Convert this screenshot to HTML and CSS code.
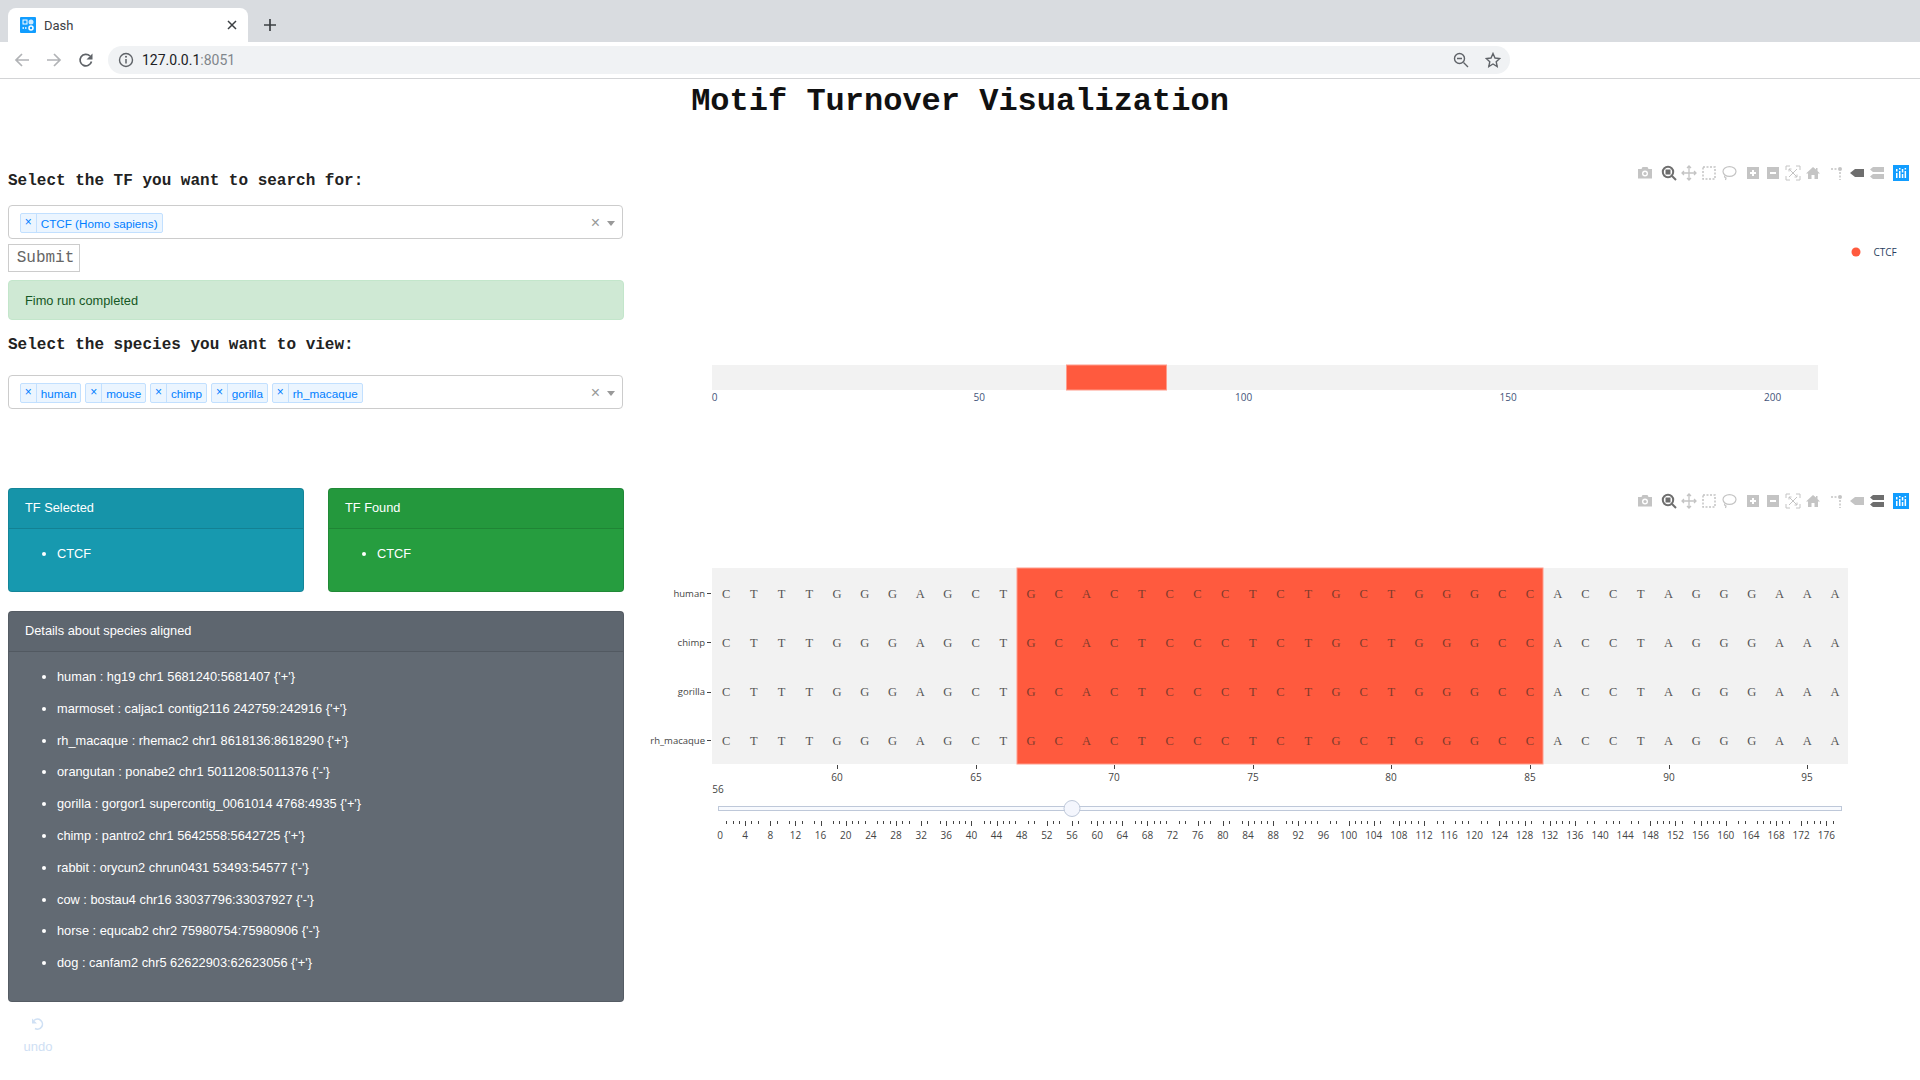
FILE: index.html
```html
<!DOCTYPE html>
<html lang="en">
<head>
    <meta charset="UTF-8">
    <title>Dash</title>
    <link rel="stylesheet" href="styles.css">
</head>
<body>

    <!-- icons shared by the two plot toolbars -->
    <svg class="icon-defs" width="0" height="0">
        <symbol id="i-camera" viewBox="0 0 16 16"><path d="M1 4h3.5l1-2h5l1 2H15v9.500H1z" fill="currentColor"/><circle cx="8" cy="8.500" r="3" fill="#fff"/><circle cx="8" cy="8.500" r="1.600" fill="currentColor"/></symbol>
        <symbol id="i-zoom" viewBox="0 0 16 16"><circle cx="7" cy="7" r="5.200" fill="none" stroke="currentColor" stroke-width="2"/><rect x="4.500" y="4.500" width="5" height="5" fill="currentColor"/><path d="M11 11l4 4" stroke="currentColor" stroke-width="2"/></symbol>
        <symbol id="i-pan" viewBox="0 0 16 16"><path d="M8 1v14M1 8h14M6 3l2-2 2 2M6 13l2 2 2-2M3 6L1 8l2 2M13 6l2 2-2 2" fill="none" stroke="currentColor" stroke-width="1.300"/></symbol>
        <symbol id="i-box" viewBox="0 0 16 16"><rect x="2" y="2" width="12" height="12" fill="none" stroke="currentColor" stroke-width="1.500" stroke-dasharray="2 1.500"/></symbol>
        <symbol id="i-lasso" viewBox="0 0 16 16"><ellipse cx="8.500" cy="6.500" rx="6.500" ry="4.800" fill="none" stroke="currentColor" stroke-width="1.200"/><path d="M4 10.500c-1 1.500 0 2 1 2.500l-.5 2" fill="none" stroke="currentColor" stroke-width="1.200"/></symbol>
        <symbol id="i-plus" viewBox="0 0 16 16"><path fill-rule="evenodd" d="M2 2h12v12H2zM7 5v2H5v2h2v2h2V9h2V7H9V5z" fill="currentColor"/></symbol>
        <symbol id="i-minus" viewBox="0 0 16 16"><path fill-rule="evenodd" d="M2 2h12v12H2zM5 7v2h6V7z" fill="currentColor"/></symbol>
        <symbol id="i-auto" viewBox="0 0 16 16"><path d="M1 5V1h4M11 1h4v4M15 11v4h-4M5 15H1v-4M4 4l8 8M12 4l-8 8M4 4h2.500M4 4v2.500M12 12H9.500M12 12V9.500" fill="none" stroke="currentColor" stroke-width="1"/></symbol>
        <symbol id="i-home" viewBox="0 0 16 16"><path d="M8 2L1 8.500h2V14h3.500v-4h3v4H13V8.500h2L12.500 6V3H11v1.500z" fill="currentColor"/></symbol>
        <symbol id="i-spike" viewBox="0 0 16 16"><path d="M2 4h7" stroke="currentColor" stroke-width="1.500" stroke-dasharray="2 1.500"/><circle cx="11" cy="4" r="2" fill="currentColor"/><path d="M11 7v8" stroke="currentColor" stroke-width="1.500" stroke-dasharray="2 1.500"/></symbol>
        <symbol id="i-closest" viewBox="0 0 16 16"><path d="M1 8l5-4h9v8H6z" fill="currentColor"/></symbol>
        <symbol id="i-compare" viewBox="0 0 16 16"><path d="M1 4.500L4 2h11v5H4zM1 11.500L4 9h11v5H4z" fill="currentColor"/></symbol>
        <symbol id="i-logo" viewBox="0 0 16 16"><rect width="16" height="16" fill="#119dff"/><path d="M3 8h1.500v5H3zM3 4h1.500v2.500H3zM6 6h1.500v7H6zM6 3h1.500v1.500H6zM8.800 9h1.500v4H8.800zM8.800 4h1.500v3.500H8.800zM11.600 6h1.500v7h-1.500zM11.600 3h1.500v1.500h-1.500z" fill="#fff"/></symbol>
    </svg>

    <!-- browser window -->
    <div class="tabstrip">
        <div class="tab">
            <svg class="favicon" width="16" height="16" viewBox="0 0 16 16">
                <rect width="16" height="16" rx="1" fill="#119dff"/>
                <rect x="3" y="3" width="4" height="4" fill="none" stroke="#fff"/>
                <circle cx="11" cy="5" r="2.500" fill="#cfeaff"/>
                <path d="M2.500 11h5" stroke="#fff" stroke-width="1.500" stroke-dasharray="1.500 1"/>
                <circle cx="11" cy="11" r="2" fill="none" stroke="#fff" stroke-width="1.500"/>
            </svg>
            <span class="tab-title">Dash</span>
            <svg class="tab-close" width="10" height="10" viewBox="0 0 10 10"><path d="M1 1l8 8M9 1l-8 8" stroke="#3c4043" stroke-width="1.500"/></svg>
        </div>
        <svg class="new-tab" width="12" height="12" viewBox="0 0 12 12"><path d="M6 0v12M0 6h12" stroke="#3c4043" stroke-width="1.700"/></svg>
    </div>
    <div class="toolbar">
        <svg class="nav-icon" width="16" height="16" viewBox="0 0 16 16"><path d="M15 8H2M8 2L2 8l6 6" fill="none" stroke="#b1b3b6" stroke-width="1.700"/></svg>
        <svg class="nav-icon" width="16" height="16" viewBox="0 0 16 16"><path d="M1 8h13M8 2l6 6-6 6" fill="none" stroke="#b1b3b6" stroke-width="1.700"/></svg>
        <svg class="nav-icon" width="16" height="16" viewBox="0 0 16 16"><path d="M13.500 9.500A5.800 5.800 0 1 1 12 4" fill="none" stroke="#5f6368" stroke-width="1.700"/><path d="M14.500 1.500v6h-6z" fill="#5f6368"/></svg>
        <div class="address">
            <svg width="16" height="16" viewBox="0 0 16 16"><circle cx="8" cy="8" r="6.500" fill="none" stroke="#5f6368" stroke-width="1.400"/><path d="M8 7v4.500" stroke="#5f6368" stroke-width="1.500"/><circle cx="8" cy="4.800" r="1" fill="#5f6368"/></svg>
            <span class="url">127.0.0.1<span class="url-port">:8051</span></span>
            <svg class="addr-zoom" width="16" height="16" viewBox="0 0 16 16"><circle cx="6.500" cy="6.500" r="5" fill="none" stroke="#5f6368" stroke-width="1.400"/><path d="M4 6.500h5M10.500 10.500l4.500 4.500" stroke="#5f6368" stroke-width="1.400"/></svg>
            <svg width="16" height="16" viewBox="0 0 16 16"><path d="M8 1.500l2 4.500 4.800.5-3.600 3.200 1 4.800L8 12l-4.200 2.500 1-4.800L1.200 6.500 6 6z" fill="none" stroke="#5f6368" stroke-width="1.400"/></svg>
        </div>
    </div>

    <h1 class="page-title">Motif Turnover Visualization</h1>

    <main class="layout">

        <section class="controls">
            <h4 class="field-label">Select the TF you want to search for:</h4>
            <div class="dropdown">
                <span class="tag"><span class="tag-x">×</span><span class="tag-text">CTCF (Homo sapiens)</span></span>
                <span class="dd-clear">×</span>
                <span class="dd-arrow"></span>
            </div>
            <button class="submit-btn">Submit</button>
            <div class="alert-ok">Fimo run completed</div>

            <h4 class="field-label field-label-2">Select the species you want to view:</h4>
            <div class="dropdown dropdown-2">
                <span class="tag"><span class="tag-x">×</span><span class="tag-text">human</span></span>
                <span class="tag"><span class="tag-x">×</span><span class="tag-text">mouse</span></span>
                <span class="tag"><span class="tag-x">×</span><span class="tag-text">chimp</span></span>
                <span class="tag"><span class="tag-x">×</span><span class="tag-text">gorilla</span></span>
                <span class="tag"><span class="tag-x">×</span><span class="tag-text">rh_macaque</span></span>
                <span class="dd-clear">×</span>
                <span class="dd-arrow"></span>
            </div>

            <div class="card-row">
                <div class="card card-info">
                    <div class="card-head">TF Selected</div>
                    <ul class="card-list"><li>CTCF</li></ul>
                </div>
                <div class="card card-success">
                    <div class="card-head">TF Found</div>
                    <ul class="card-list"><li>CTCF</li></ul>
                </div>
            </div>

            <div class="card card-details">
                <div class="card-head">Details about species aligned</div>
                <ul class="card-list">
                    <li>human : hg19 chr1 5681240:5681407 {'+'}</li>
                    <li>marmoset : caljac1 contig2116 242759:242916 {'+'}</li>
                    <li>rh_macaque : rhemac2 chr1 8618136:8618290 {'+'}</li>
                    <li>orangutan : ponabe2 chr1 5011208:5011376 {'-'}</li>
                    <li>gorilla : gorgor1 supercontig_0061014 4768:4935 {'+'}</li>
                    <li>chimp : pantro2 chr1 5642558:5642725 {'+'}</li>
                    <li>rabbit : orycun2 chrun0431 53493:54577 {'-'}</li>
                    <li>cow : bostau4 chr16 33037796:33037927 {'-'}</li>
                    <li>horse : equcab2 chr2 75980754:75980906 {'-'}</li>
                    <li>dog : canfam2 chr5 62622903:62623056 {'+'}</li>
                </ul>
            </div>

            <div class="undo">
                <svg width="14" height="14" viewBox="0 0 14 14"><path d="M3 3.500A5 5 0 1 1 4 11.500" fill="none" stroke="#cfe0f4" stroke-width="1.600"/><path d="M1 1.500v5h5z" fill="#cfe0f4"/></svg>
                <span>undo</span>
            </div>
        </section>

        <section class="plots">
            <div class="graph graph-top">
                <div class="modebar">
                    <div class="mb-group"><svg class="mb-btn"><use href="#i-camera"/></svg></div>
                    <div class="mb-group"><svg class="mb-btn mb-active"><use href="#i-zoom"/></svg><svg class="mb-btn"><use href="#i-pan"/></svg><svg class="mb-btn"><use href="#i-box"/></svg><svg class="mb-btn"><use href="#i-lasso"/></svg></div>
                    <div class="mb-group"><svg class="mb-btn"><use href="#i-plus"/></svg><svg class="mb-btn"><use href="#i-minus"/></svg><svg class="mb-btn"><use href="#i-auto"/></svg><svg class="mb-btn"><use href="#i-home"/></svg></div>
                    <div class="mb-group"><svg class="mb-btn"><use href="#i-spike"/></svg><svg class="mb-btn mb-active"><use href="#i-closest"/></svg><svg class="mb-btn"><use href="#i-compare"/></svg></div>
                    <div class="mb-group"><svg class="mb-btn"><use href="#i-logo"/></svg></div>
                </div>
                <svg id="overviewPlot" class="plot" viewBox="632 140 1288 340"></svg>
            </div>
            <div class="graph graph-bottom">
                <div class="modebar">
                    <div class="mb-group"><svg class="mb-btn"><use href="#i-camera"/></svg></div>
                    <div class="mb-group"><svg class="mb-btn mb-active"><use href="#i-zoom"/></svg><svg class="mb-btn"><use href="#i-pan"/></svg><svg class="mb-btn"><use href="#i-box"/></svg><svg class="mb-btn"><use href="#i-lasso"/></svg></div>
                    <div class="mb-group"><svg class="mb-btn"><use href="#i-plus"/></svg><svg class="mb-btn"><use href="#i-minus"/></svg><svg class="mb-btn"><use href="#i-auto"/></svg><svg class="mb-btn"><use href="#i-home"/></svg></div>
                    <div class="mb-group"><svg class="mb-btn"><use href="#i-spike"/></svg><svg class="mb-btn"><use href="#i-closest"/></svg><svg class="mb-btn mb-active"><use href="#i-compare"/></svg></div>
                    <div class="mb-group"><svg class="mb-btn"><use href="#i-logo"/></svg></div>
                </div>
                <svg id="alignPlot" class="plot" viewBox="632 480 1288 400"></svg>
            </div>
        </section>

    </main>

    <script src="chart.js"></script>
</body>
</html>
```

FILE: styles.css
```css
* {
    box-sizing: border-box;
}

body {
    font-family: 'Liberation Sans', Arial, sans-serif;
    margin: 0;
    padding: 0;
    background: white;
    overflow: hidden;
}

.icon-defs {
    position: absolute;
}

/* browser window */
.tabstrip {
    height: 42px;
    background: #d9dce0;
    display: flex;
    align-items: flex-end;
    padding-left: 8px;
}

.tab {
    width: 240px;
    height: 34px;
    background: white;
    border-radius: 8px 8px 0 0;
    display: flex;
    align-items: center;
    padding: 0 11px 0 12px;
}

.tab-title {
    font-family: Roboto, sans-serif;
    font-size: 13px;
    color: #3c4043;
    margin-left: 8px;
}

.tab-close {
    margin-left: auto;
}

.new-tab {
    margin: 0 0 11px 16px;
}

.toolbar {
    height: 37px;
    border-bottom: 1px solid #d3d4d6;
    display: flex;
    align-items: center;
    padding-left: 14px;
    gap: 16px;
}

.address {
    width: 1402px;
    height: 28px;
    background: #f0f2f4;
    border-radius: 14px;
    display: flex;
    align-items: center;
    padding: 0 9px 0 10px;
    margin-left: -2px;
}

.url {
    font-family: Roboto, sans-serif;
    font-size: 14px;
    color: #202124;
    margin-left: 8px;
}

.url-port {
    color: #80868b;
}

.addr-zoom {
    margin-left: auto;
    margin-right: 16px;
}

/* page */
.page-title {
    font-family: 'Liberation Mono', monospace;
    font-size: 32px;
    font-weight: bold;
    line-height: 42px;
    margin: 0;
    padding-top: 2px;
    height: 42px;
    text-align: center;
    color: #111;
}

.layout {
    display: flex;
}

.controls {
    width: 632px;
    padding-left: 8px;
    flex: none;
}

.field-label {
    font-family: 'Liberation Mono', monospace;
    font-size: 16px;
    line-height: 22px;
    font-weight: bold;
    color: #222;
    margin: 49px 0 13px;
}

.field-label-2 {
    margin: 14px 0 19px;
}

.dropdown {
    width: 615px;
    height: 34px;
    border: 1px solid #ccc;
    border-radius: 4px;
    display: flex;
    align-items: center;
    gap: 4px;
    padding: 2px 7px 0 11px;
}

.tag {
    height: 20px;
    display: flex;
    align-items: center;
    background: #ebf5ff;
    border: 1px solid #c2e0ff;
    border-radius: 2px;
    color: #007eff;
    font-size: 11.700px;
}

.tag-x {
    width: 15.700px;
    height: 100%;
    border-right: 1px solid #c2e0ff;
    text-align: center;
    line-height: 17px;
    font-size: 12px;
    flex: none;
}

.tag-text {
    padding: 0 4px;
    white-space: nowrap;
}

.dd-clear {
    margin-left: auto;
    color: #999;
    font-size: 16px;
    line-height: 16px;
    margin-right: 3px;
}

.dd-arrow {
    width: 0;
    height: 0;
    border: 4px solid transparent;
    border-top: 5px solid #999;
    border-bottom: none;
}

.submit-btn {
    display: block;
    width: 72px;
    height: 28px;
    margin-top: 5px;
    padding: 0 0 0 3px;
    background: white;
    border: 1px solid #ccc;
    font-family: 'Liberation Mono', monospace;
    font-size: 16px;
    color: #666;
}

.alert-ok {
    width: 616px;
    height: 40px;
    margin-top: 8px;
    padding: 0 16px;
    line-height: 39px;
    background: #cfe9d4;
    border: 1px solid #c3e6cb;
    border-radius: 4px;
    font-size: 12.800px;
    color: #155724;
}

.card-row {
    display: flex;
    gap: 24px;
    margin-top: 79px;
    width: 616px;
}

.card-row .card {
    width: 296px;
    height: 104px;
}

.card {
    color: white;
    border: 1px solid rgba(0,0,0,0.125);
    border-radius: 4px;
    font-size: 12.800px;
}

.card-head {
    height: 40px;
    line-height: 38px;
    padding: 0 16px;
    background: rgba(0,0,0,0.03);
    border-bottom: 1px solid rgba(0,0,0,0.125);
}

.card-info {
    background: #1799af;
}

.card-success {
    background: #269d3f;
}

.card-details {
    width: 616px;
    height: 391px;
    margin-top: 19px;
    background: #626a73;
}

.card-list {
    margin: 17px 0 0;
    padding-left: 48px;
    line-height: 16px;
}

.card-list li {
    margin-bottom: 15.800px;
}

.undo {
    width: 60px;
    margin-top: 15px;
    display: flex;
    flex-direction: column;
    align-items: center;
    gap: 8px;
    color: #cfe0f4;
    font-size: 13px;
}

.plots {
    flex: 1;
    padding-top: 19px;
}

.graph {
    position: relative;
}

.graph-top {
    height: 340px;
}

.graph-bottom {
    height: 400px;
}

.plot {
    display: block;
    width: 1288px;
    height: 100%;
    font-family: 'Open Sans', sans-serif;
    font-size: 10px;
}

/* plotly toolbar */
.modebar {
    position: absolute;
    right: 11px;
    display: flex;
    gap: 8px;
    color: #c4c4c4;
}

.graph-top .modebar {
    top: 25px;
}

.graph-bottom .modebar {
    top: 13px;
}

.mb-group {
    display: flex;
    gap: 4px;
}

.mb-btn {
    width: 16px;
    height: 16px;
}

.mb-active {
    color: #6e6e6e;
}

/* chart text and shapes */
.bg-band {
    fill: #f2f2f2;
}

.red-band {
    fill: #ff5a3e;
    stroke: #ff9c8b;
    stroke-width: 1;
}

.tick-label {
    fill: #444;
    text-anchor: middle;
}

.tick-label-top {
    fill: #44557a;
}

.row-label {
    fill: #444;
    font-size: 9.500px;
    text-anchor: end;
}

.legend-label {
    fill: #2a3f5f;
}

.tick-mark {
    stroke: #444;
    stroke-width: 1;
    shape-rendering: crispEdges;
}

.base {
    font-family: 'Liberation Serif', serif;
    font-size: 12.500px;
    text-anchor: middle;
    fill: #555;
}

.base-on-red {
    fill: #7d3a2c;
}

.slider-rail {
    fill: #f8fafe;
    stroke: #bec8d9;
    stroke-width: 1;
}

.slider-handle {
    fill: #f4f6fd;
    stroke: #bec8d9;
    stroke-width: 1;
}
```

FILE: chart.js
```js
const NS = "http://www.w3.org/2000/svg";

function add(svg, tag, attrs, text) {
  const el = document.createElementNS(NS, tag);
  for (const k in attrs) el.setAttribute(k, attrs[k]);
  if (text !== undefined) el.textContent = text;
  svg.appendChild(el);
  return el;
}

// overview bar
const top1 = document.getElementById("overviewPlot");
add(top1, "rect", { class: "bg-band", x: 712, y: 365, width: 1106, height: 25 });
add(top1, "rect", { class: "red-band", x: 1066.5, y: 365, width: 100, height: 25 });
[0, 50, 100, 150, 200].forEach(v => {
  add(top1, "text", { class: "tick-label tick-label-top", x: 714.7 + v * 5.29, y: 400.5 }, v);
});
add(top1, "circle", { cx: 1856, cy: 252, r: 4.5, fill: "#ff5a3e" });
add(top1, "text", { class: "legend-label", x: 1873.5, y: 255.5 }, "CTCF");

// alignment
const plot = document.getElementById("alignPlot");
const seq = "CTTTGGGAGCTGCACTCCCTCTGCTGGGCCACCTAGGGAAA";
const rows = [["human", 593], ["chimp", 642], ["gorilla", 691.5], ["rh_macaque", 740]];
const xOf = n => 837 + (n - 60) * 27.72;

add(plot, "rect", { class: "bg-band", x: 712, y: 568, width: 1136, height: 196 });
add(plot, "rect", { class: "red-band", x: 1017, y: 568, width: 526, height: 196 });

rows.forEach(([name, y]) => {
  add(plot, "text", { class: "row-label", x: 705, y: y + 3.5 }, name);
  add(plot, "line", { class: "tick-mark", x1: 707, x2: 711, y1: Math.round(y), y2: Math.round(y) });
  seq.split("").forEach((b, i) => {
    const pos = 56 + i;
    const onRed = pos >= 67 && pos <= 85;
    add(plot, "text", { class: onRed ? "base base-on-red" : "base", x: xOf(pos), y: y + 4.5 }, b);
  });
});

[60, 65, 70, 75, 80, 85, 90, 95].forEach(v => {
  const x = Math.round(xOf(v));
  add(plot, "line", { class: "tick-mark", x1: x, x2: x, y1: 765, y2: 769 });
  add(plot, "text", { class: "tick-label", x: x, y: 781 }, v);
});

const skipped = [0, 7, 10, 14, 17, 24, 31, 34, 41, 48, 51, 55, 58, 65, 72, 75, 79, 82, 89, 96, 99, 106, 113,
  116, 120, 123, 130, 137, 140, 144, 147, 154, 161, 164, 171];
const sx = n => 720 + n * 6.286;

add(plot, "text", { class: "tick-label", x: 718, y: 793 }, 56);
add(plot, "rect", { class: "slider-rail", x: 718.5, y: 806.5, width: 1123, height: 4 });

for (let n = 0; n <= 177; n++) {
  if (!skipped.includes(n)) {
    const x = Math.round(sx(n));
    add(plot, "line", { class: "tick-mark", x1: x, x2: x, y1: 821, y2: n % 4 === 0 ? 826 : 824 });
  }
  if (n % 4 === 0) {
    add(plot, "text", { class: "tick-label", x: sx(n), y: 839 }, n);
  }
}
add(plot, "circle", { class: "slider-handle", cx: 1072, cy: 808.5, r: 8 });
```
